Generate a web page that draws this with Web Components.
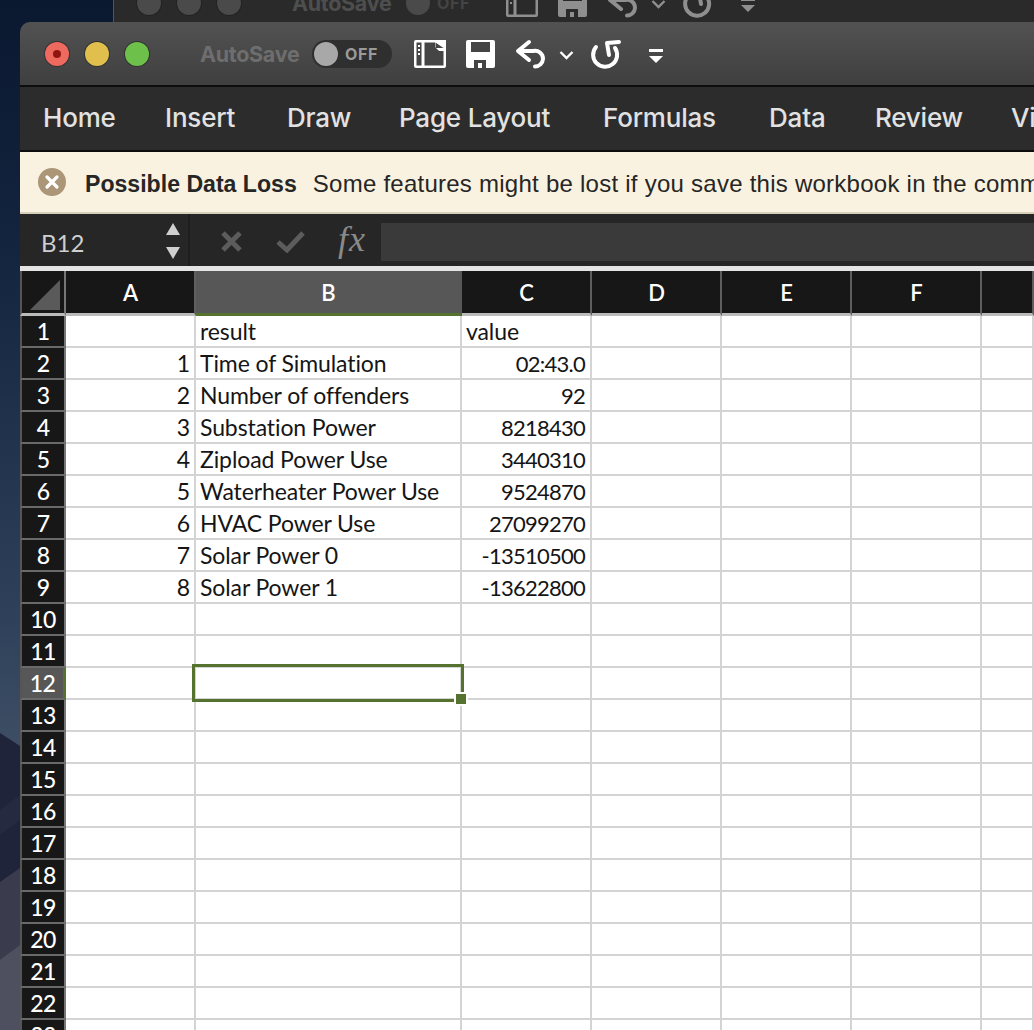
<!DOCTYPE html>
<html>
<head>
<meta charset="utf-8">
<title>Excel</title>
<style>
html, body { margin: 0; height: 1030px; overflow: hidden; background: #0b1a30; }
body { position: relative; }
</style>
</head>
<body>
<desk-backdrop></desk-backdrop>
<ghost-window></ghost-window>
<excel-window>
  <title-row></title-row>
  <ribbon-tabs>
    <ribbon-tab width="122">Home</ribbon-tab>
    <ribbon-tab width="122">Insert</ribbon-tab>
    <ribbon-tab width="112">Draw</ribbon-tab>
    <ribbon-tab width="204">Page Layout</ribbon-tab>
    <ribbon-tab width="166">Formulas</ribbon-tab>
    <ribbon-tab width="106">Data</ribbon-tab>
    <ribbon-tab width="136">Review</ribbon-tab>
    <ribbon-tab width="23">Vi</ribbon-tab>
  </ribbon-tabs>
  <message-bar title-text="Possible Data Loss">Some features might be lost if you save this workbook in the comm</message-bar>
  <formula-bar cell="B12"></formula-bar>
  <sheet-grid></sheet-grid>
</excel-window>

<script>
(function () {
    'use strict';

    const toolIcons = `
      <svg class="icons" width="252" height="36" viewBox="414 36 252 36" fill="none">
        <rect x="414" y="40" width="32" height="28" rx="2" fill="currentColor"/>
        <rect x="416.5" y="42.5" width="5" height="23" fill="var(--hole)"/>
        <g fill="currentColor"><rect x="418" y="45" width="2" height="2"/><rect x="418" y="49" width="2" height="2"/><rect x="418" y="53" width="2" height="2"/></g>
        <rect x="424.5" y="42.5" width="19" height="23" fill="var(--hole)"/>
        <path d="M435 40h11v11h-7l-4-4z" fill="currentColor"/>
        <path d="M435.5 42.5v5.5h8z" fill="var(--hole)"/>
        <path d="M468 40h25a2 2 0 0 1 2 2v24a2 2 0 0 1-2 2h-25a2 2 0 0 1-2-2v-24a2 2 0 0 1 2-2z" fill="currentColor"/>
        <rect x="471" y="42" width="19" height="10" fill="var(--hole)"/>
        <path d="M474 68v-8h12v8h-4v-5h-4v5z" fill="var(--hole)"/>
        <path d="M529 42l-11 9 11 9M519 51h14a8 8 0 0 1 10 8a8 8 0 0 1-8 7.500" stroke="currentColor" stroke-width="4" stroke-linecap="round" stroke-linejoin="round"/>
        <path d="M560.5 52l6 6 6-6" stroke="currentColor" stroke-width="2.4"/>
        <path d="M596 47a12 12 0 1 0 19 1M619 42l-12 1 2 12" stroke="currentColor" stroke-width="4" stroke-linecap="round" stroke-linejoin="round"/>
        <rect x="649" y="49" width="14" height="3" fill="currentColor"/>
        <path d="M649 56h14l-7 7z" fill="currentColor"/>
      </svg>`;

    class DeskBackdrop extends HTMLElement {
        constructor() {
            super();
            this.attachShadow({ mode: 'open' }).innerHTML = `<style>
              :host { position: absolute; left: 0; top: 0; width: 1034px; height: 1030px; display: block;
                background: linear-gradient(180deg, #0a1830 0%, #14253f 25%, #2a3c56 55%, #3c4d64 72%); }
              svg { display: block; }
            </style>
            <svg width="40" height="1030" viewBox="0 0 40 1030">
              <path d="M0 733L20 746H40V1030H0z" fill="#20243a"/>
              <path d="M0 810L20 795V820L0 835z" fill="#262a40"/>
              <path d="M0 882L20 868V1030H0z" fill="#3a3c4e"/>
              <path d="M0 960L20 945V1030H0z" fill="#4e505f"/>
            </svg>`;
        }
    }
    customElements.define('desk-backdrop', DeskBackdrop);

    class TitleRow extends HTMLElement {
        constructor() {
            super();
            this.attachShadow({ mode: 'open' }).innerHTML = `<style>
              :host { display: flex; align-items: center; height: 63px; padding-left: 25px; box-sizing: border-box;
                color: #fff; --hole: #454545; --label: #6e6e6e; --track: #2f2f2f; --knob: #a8a8a8; --off: #9a9a9a;
                --red: #ee6a5f; --yellow: #e1bf4d; --green: #6dc049; --ring: #333; --dot: #8f1610; }
              :host([dim]) { color: #8f8f8f; --hole: #2a2a2a; --label: #4e4e4e; --track: #2a2a2a; --knob: #4a4a4a; --off: #444;
                --red: #4a4a4a; --yellow: #4a4a4a; --green: #4a4a4a; --ring: #222; --dot: #4a4a4a; }
              .light { width: 24px; height: 24px; border-radius: 50%; box-shadow: 0 0 0 1px var(--ring); margin-right: 16px;
                display: flex; align-items: center; justify-content: center; }
              .light i { width: 8px; height: 8px; border-radius: 50%; background: var(--dot); }
              .auto { font: 700 21.500px "Inter", sans-serif; letter-spacing: -.3px; color: var(--label); margin-left: 51px; width: 112px; }
              .toggle { display: flex; align-items: center; width: 80px; height: 28px; border-radius: 14px; background: var(--track); }
              .toggle b { width: 24px; height: 24px; margin-left: 2px; border-radius: 50%; background: var(--knob); }
              .toggle span { font: 700 16px "Inter", sans-serif; letter-spacing: .6px; color: var(--off); margin-left: 7px; }
              .icons { margin-left: 22px; display: block; }
            </style>
            <div class="light" style="background:var(--red)"><i></i></div>
            <div class="light" style="background:var(--yellow)"></div>
            <div class="light" style="background:var(--green);margin-right:0"></div>
            <div class="auto">AutoSave</div>
            <div class="toggle"><b></b><span>OFF</span></div>
            ${toolIcons}`;
        }
    }
    customElements.define('title-row', TitleRow);

    class GhostWindow extends HTMLElement {
        constructor() {
            super();
            this.attachShadow({ mode: 'open' }).innerHTML = `<style>
              :host { display: block; height: 22px; margin-left: 113px; overflow: hidden; background: #2a2a2a;
                box-shadow: inset 1px 0 0 #555; position: relative; }
              title-row { margin: -29px 0 0 -1px; position: relative; }
            </style>
            <title-row dim></title-row>`;
        }
    }
    customElements.define('ghost-window', GhostWindow);

    class ExcelWindow extends HTMLElement {
        constructor() {
            super();
            this.attachShadow({ mode: 'open' }).innerHTML = `<style>
              :host { display: block; margin-left: 20px; height: 1008px; position: relative; overflow: hidden;
                border-radius: 10px 0 0 0; background: linear-gradient(180deg, #525252 0, #3f3f3f 63px); }
            </style>
            <slot></slot>`;
        }
    }
    customElements.define('excel-window', ExcelWindow);

    class RibbonTabs extends HTMLElement {
        constructor() {
            super();
            this.attachShadow({ mode: 'open' }).innerHTML = `<style>
              :host { display: flex; align-items: center; height: 67px; box-sizing: border-box; padding: 0 0 3px 23px;
                background: #2c2c2c; border-top: 2px solid #0d0d0d; border-bottom: 2px solid #0d0d0d; overflow: hidden; }
            </style>
            <slot></slot>`;
        }
    }
    customElements.define('ribbon-tabs', RibbonTabs);

    class RibbonTab extends HTMLElement {
        constructor() {
            super();
            this.attachShadow({ mode: 'open' }).innerHTML = `<style>
              :host { display: block; flex: none; font: 500 26px "Inter", sans-serif; letter-spacing: -.2px; color: #e2e2e2; white-space: nowrap; }
            </style>
            <slot></slot>`;
        }
        connectedCallback() {
            this.style.width = this.getAttribute('width') + 'px';
        }
    }
    customElements.define('ribbon-tab', RibbonTab);

    class MessageBar extends HTMLElement {
        constructor() {
            super();
            this.attachShadow({ mode: 'open' }).innerHTML = `<style>
              :host { display: flex; align-items: center; height: 62px; box-sizing: border-box; padding: 0 0 0 18px;
                background: #faf2e0; border-bottom: 2px solid #d8cfba; color: #262626; white-space: nowrap; overflow: hidden;
                font: 23.100px "Liberation Sans", sans-serif; }
              svg { flex: none; margin-right: 19px; }
              b { margin-right: 16px; }
              .text { padding-top: 4px; }
              .body { font-size: 24px; letter-spacing: .25px; }
            </style>
            <svg width="28" height="28" viewBox="0 0 28 28">
              <circle cx="14" cy="14" r="14" fill="#ab9677"/>
              <path d="M9 9l10 10M19 9L9 19" stroke="#fff" stroke-width="3.200" stroke-linecap="round"/>
            </svg>
            <b class="text"></b><span class="text body"><slot></slot></span>`;
        }
        connectedCallback() {
            this.shadowRoot.querySelector('b').textContent = this.getAttribute('title-text');
        }
    }
    customElements.define('message-bar', MessageBar);

    class FormulaBar extends HTMLElement {
        constructor() {
            super();
            this.attachShadow({ mode: 'open' }).innerHTML = `<style>
              :host { display: flex; align-items: center; height: 52px; background: #262626; border-bottom: 5px solid #e4e4e4; }
              .name { display: flex; align-items: center; justify-content: space-between; box-sizing: border-box; width: 170px; height: 52px;
                padding: 4px 7px 0 21px; border-right: 2px solid #1e1e1e; font: 24px "Lato", sans-serif; color: #cfcfcf; }
              .name svg { margin-top: -3px; }
              .tools { flex: none; display: block; margin: 3px 0 0 31px; }
              .fx { font: italic 36px "Liberation Serif", serif; letter-spacing: 1px; color: #8a8a8a; margin: -2px 0 0 33px; width: 43px; }
              .input { flex: 1; height: 38px; margin-top: 3px; background: #3a3a3a; }
            </style>
            <div class="name"><span id="cell"></span>
              <svg width="16" height="38" viewBox="0 0 16 38"><path d="M1 13L8 1l7 12zM1 25l7 12 7-12z" fill="#cfcfcf"/></svg>
            </div>
            <svg class="tools" width="84" height="22" viewBox="0 0 84 22" fill="none">
              <path d="M2 2l17 17M19 2L2 19" stroke="#5c5c5c" stroke-width="5"/>
              <path d="M57 11l9 8 16-17" stroke="#5c5c5c" stroke-width="5"/>
            </svg>
            <span class="fx">fx</span>
            <div class="input"></div>`;
        }
        connectedCallback() {
            this.shadowRoot.getElementById('cell').textContent = this.getAttribute('cell');
        }
    }
    customElements.define('formula-bar', FormulaBar);

    const columns = ['A', 'B', 'C', 'D', 'E', 'F', ''];
    const data = {
        1: ['', 'result', 'value'],
        2: ['1', 'Time of Simulation', '02:43.0'],
        3: ['2', 'Number of offenders', '92'],
        4: ['3', 'Substation Power', '8218430'],
        5: ['4', 'Zipload Power Use', '3440310'],
        6: ['5', 'Waterheater Power Use', '9524870'],
        7: ['6', 'HVAC Power Use', '27099270'],
        8: ['7', 'Solar Power 0', '-13510500'],
        9: ['8', 'Solar Power 1', '-13622800']
    };

    class SheetGrid extends HTMLElement {
        constructor() {
            super();
            let cells = '<div class="corner"><svg width="30" height="30"><path d="M0 30L30 0V30z" fill="#5a5a5a"/></svg></div>';
            columns.forEach((c) => {
                cells += `<div class="col${c === 'B' ? ' sel' : ''}">${c}</div>`;
            });
            for (let r = 1; r <= 23; r++) {
                cells += `<div class="row${r === 12 ? ' sel' : ''}">${r}</div>`;
                const vals = data[r] || [];
                for (let i = 0; i < columns.length; i++) {
                    const v = vals[i] || '';
                    const right = i === 0 || (i === 2 && r > 1);
                    cells += `<div class="cell${right ? ' right' : ''}${i === 2 ? ' num' : ''}">${v}</div>`;
                }
            }
            this.attachShadow({ mode: 'open' }).innerHTML = `<style>
              :host { display: grid; position: relative; overflow: hidden; background: #fff;
                grid-template-columns: 46px 130px 266px 130px 130px 130px 130px 1fr;
                grid-template-rows: 45px; grid-auto-rows: 32px; font: 23px "Lato", sans-serif; font-variant-ligatures: none; color: #151515; }
              div { box-sizing: border-box; white-space: nowrap; }
              .corner { background: #171717; border-left: 2px solid #555; border-right: 2px solid #777; border-bottom: 3px solid #bbb;
                display: flex; padding: 9px 0 0 8px; }
              .col { background: #171717; color: #fff; font-weight: 600; font-size: 22px; border-right: 2px solid #5e5e5e; border-bottom: 3px solid #bbb;
                display: flex; align-items: center; justify-content: center; padding: 1px 0 0 1px; }
              .col.sel { background: #575757; border-right-color: #575757; border-bottom-color: #55722e; }
              .row { background: #171717; color: #fff; font-weight: 500; letter-spacing: -.6px; border-left: 2px solid #555; border-right: 2px solid #777; border-bottom: 2px solid #6a6a6a;
                display: flex; align-items: center; justify-content: center; }
              .row.sel { background: #575757; border-right: 3px solid #55722e; }
              .cell { border-right: 2px solid #d4d4d4; border-bottom: 2px solid #d4d4d4; padding: 0 4px; display: flex; align-items: center; letter-spacing: -.1px; }
              .num.right { font-size: 22px; letter-spacing: -.75px; padding-right: 5px; }
              .right { justify-content: flex-end; }
              .box { position: absolute; left: 172px; top: 393px; width: 272px; height: 38px; border: 3px solid #55722e; }
              .handle { position: absolute; left: 436px; top: 423px; width: 10px; height: 10px; background: #55722e; outline: 2px solid #fff; }
            </style>
            ${cells}
            <div class="box"></div><div class="handle"></div>`;
        }
    }
    customElements.define('sheet-grid', SheetGrid);
})();
</script>
</body>
</html>
